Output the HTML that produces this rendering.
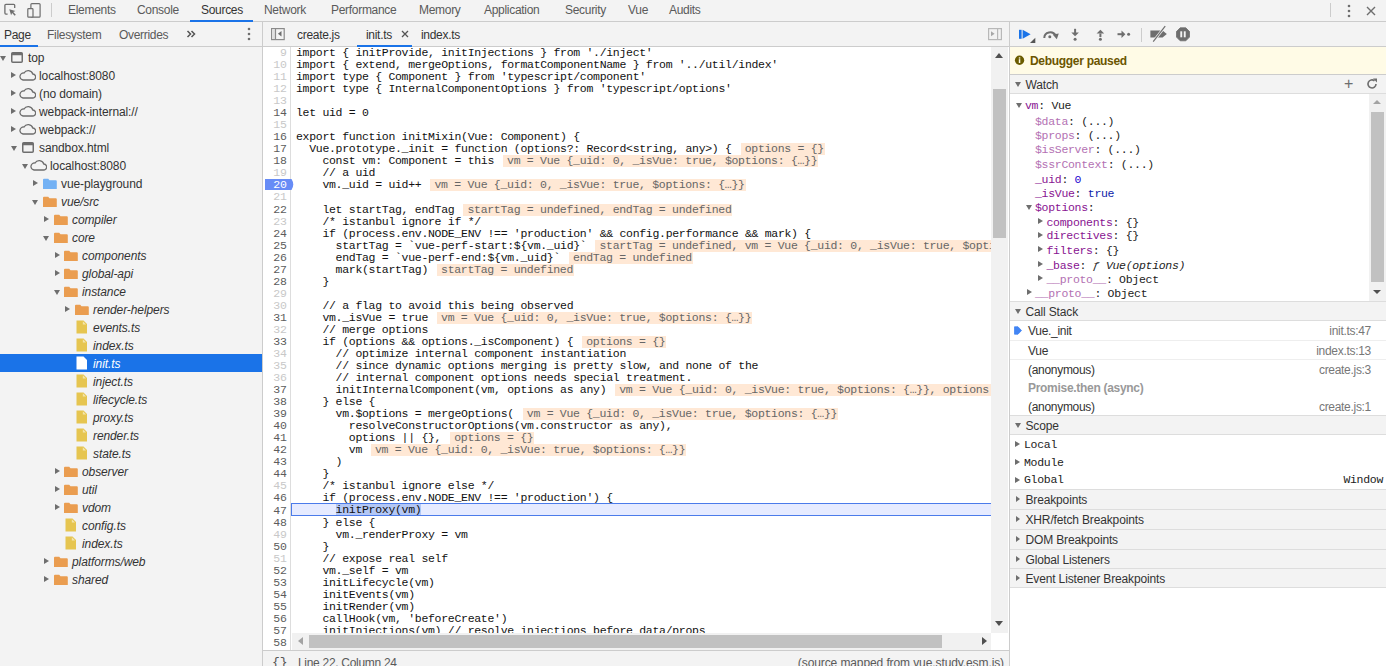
<!DOCTYPE html><html><head><meta charset="utf-8"><style>
*{box-sizing:border-box;margin:0;padding:0}
html,body{width:1386px;height:666px;overflow:hidden;background:#fff;font-family:"Liberation Sans", sans-serif;font-size:12px;color:#333;letter-spacing:-0.3px}
.abs{position:absolute}
#topbar{left:0;top:0;width:1386px;height:22px;background:#f3f3f3;border-bottom:1px solid #ccc}
.ttab{position:absolute;top:3px;font-size:12px;color:#5a5a5a;white-space:nowrap}
.ttab.sel{color:#333}
#left{left:0;top:22px;width:263px;height:644px;background:#f3f3f3;border-right:1px solid #ccc}
#lefttabs{left:0;top:0;width:262px;height:25px;border-bottom:1px solid #ccc}
.row{position:absolute;left:0;width:262px;height:18px;white-space:nowrap;letter-spacing:-0.1px}
.row.sel{background:#1a73e8;color:#fff}
.row .t{position:absolute;top:3px}
.it{font-style:italic}
#editor{left:263px;top:22px;width:746px;height:644px;background:#fff}
#etabs{left:0;top:0;width:746px;height:25px;background:#f3f3f3;border-bottom:1px solid #ccc}
#gutter{left:0;top:25px;width:28px;height:603px;background:#fff;border-right:1px solid #ddd}
.ln{position:absolute;right:3px;font-family:"Liberation Mono", monospace;font-size:11.5px;line-height:12px;color:#c8c8c8;text-align:right;letter-spacing:0}
.ln.d{color:#5c5c5c}
.cl{position:absolute;left:33px;height:12px;font-family:"Liberation Mono", monospace;font-size:11.5px;line-height:12px;color:#111;white-space:pre;letter-spacing:-0.3px}
.wd{display:inline-block;vertical-align:top;height:12px;line-height:12px;margin-top:0px;background:#ffe8d5;color:#666;margin-left:9px;padding-left:4px;padding-right:1px}
#status{left:0;top:628px;width:746px;height:16px;background:#f3f3f3;border-top:1px solid #ccc}
#right{left:1009px;top:22px;width:377px;height:644px;background:#fff;border-left:1px solid #ccc}
.hdr{position:absolute;left:0;width:376px;background:#f3f3f3;border-bottom:1px solid #ddd;letter-spacing:-0.15px}
.hdr .t{position:absolute;left:16px;top:3px}
.tri{position:absolute;width:0;height:0}
.tri.dn{border-left:4px solid transparent;border-right:4px solid transparent;border-top:6px solid #6e6e6e}
.tri.rt{border-top:4px solid transparent;border-bottom:4px solid transparent;border-left:6px solid #6e6e6e}
.mono{font-family:"Liberation Mono", monospace;font-size:11.5px;letter-spacing:-0.3px}
</style></head><body>
<div id="topbar" class="abs">
<svg class="abs" style="left:0;top:0" width="50" height="21" viewBox="0 0 50 21">
<path d="M7.6 14.1H5.9a1 1 0 0 1-1-1V5.3a1 1 0 0 1 1-1h7.8a1 1 0 0 1 1 1V8" fill="none" stroke="#6e6e6e" stroke-width="1.3"/>
<path d="M9.3 9.3l6.1 1.6-2.2 1 2.6 2.8-1.1 1-2.6-2.8-1 2.3z" fill="#6e6e6e"/>
<rect x="30.9" y="3.6" width="9.2" height="13.6" rx="1" fill="none" stroke="#6e6e6e" stroke-width="1.2"/>
<rect x="27.8" y="8.6" width="5.2" height="8.6" rx="0.8" fill="#f3f3f3" stroke="#6e6e6e" stroke-width="1.2"/>
</svg>
<div class="abs" style="left:51px;top:3px;width:1px;height:14px;background:#ccc"></div>
<div class="ttab" style="left:68px">Elements</div>
<div class="ttab" style="left:137px">Console</div>
<div class="ttab sel" style="left:201px">Sources</div>
<div class="ttab" style="left:264px">Network</div>
<div class="ttab" style="left:331px">Performance</div>
<div class="ttab" style="left:419px">Memory</div>
<div class="ttab" style="left:484px">Application</div>
<div class="ttab" style="left:565px">Security</div>
<div class="ttab" style="left:628px">Vue</div>
<div class="ttab" style="left:669px">Audits</div>
<div class="abs" style="left:190px;top:20px;width:63px;height:2px;background:#1a73e8"></div>
<div class="abs" style="left:1330px;top:3px;width:1px;height:14px;background:#ccc"></div>
<svg class="abs" style="left:1344px;top:3px" width="10" height="16" viewBox="0 0 10 16"><circle cx="5" cy="3" r="1.3" fill="#6e6e6e"/><circle cx="5" cy="8" r="1.3" fill="#6e6e6e"/><circle cx="5" cy="13" r="1.3" fill="#6e6e6e"/></svg>
<svg class="abs" style="left:1365px;top:5px" width="12" height="12" viewBox="0 0 12 12"><path d="M2 2L10 10M10 2L2 10" stroke="#6e6e6e" stroke-width="1.4"/></svg>
</div>
<div id="left" class="abs">
<div id="lefttabs" class="abs">
<div class="ttab" style="left:4px;top:6px;color:#333">Page</div>
<div class="ttab" style="left:47px;top:6px;color:#5a5a5a">Filesystem</div>
<div class="ttab" style="left:119px;top:6px;color:#5a5a5a">Overrides</div>
<div class="abs" style="left:0;top:23px;width:38px;height:2px;background:#1a73e8"></div>
<svg class="abs" style="left:186px;top:8px" width="10" height="8" viewBox="0 0 10 8"><path d="M1.5 1L4.5 4 1.5 7M5.5 1L8.5 4 5.5 7" fill="none" stroke="#555" stroke-width="1.5"/></svg>
<svg class="abs" style="left:244px;top:4px" width="10" height="16" viewBox="0 0 10 16"><circle cx="5" cy="3" r="1.3" fill="#6e6e6e"/><circle cx="5" cy="8" r="1.3" fill="#6e6e6e"/><circle cx="5" cy="13" r="1.3" fill="#6e6e6e"/></svg>
</div>
<div class="row" style="top:26px">
<div class="tri dn" style="left:0.0px;top:8px;border-left-width:3.1px;border-right-width:3.1px;border-top-width:5px;border-top-color:#6e6e6e"></div>
<svg class="abs" style="left:11px;top:4px" width="12" height="11" viewBox="0 0 12 11"><rect x="0.75" y="0.75" width="10.5" height="9.5" rx="1" fill="none" stroke="#6e6e6e" stroke-width="1.5"/><rect x="0.75" y="0.75" width="10.5" height="2.5" fill="#6e6e6e"/></svg>
<div class="t" style="left:28px">top</div>
</div>
<div class="row" style="top:44px">
<div class="tri rt" style="left:11.4px;top:6px;border-top-width:3px;border-bottom-width:3px;border-left-width:5px;border-left-color:#6e6e6e"></div>
<svg class="abs" style="left:19px;top:3px" width="17" height="12" viewBox="0 0 17 12"><path d="M4 11h9.5a3 3 0 0 0 .3-6A4.8 4.8 0 0 0 5 4a3.5 3.5 0 0 0-1 7z" fill="none" stroke="#6e6e6e" stroke-width="1.3"/></svg>
<div class="t" style="left:39px">localhost:8080</div>
</div>
<div class="row" style="top:62px">
<div class="tri rt" style="left:11.4px;top:6px;border-top-width:3px;border-bottom-width:3px;border-left-width:5px;border-left-color:#6e6e6e"></div>
<svg class="abs" style="left:19px;top:3px" width="17" height="12" viewBox="0 0 17 12"><path d="M4 11h9.5a3 3 0 0 0 .3-6A4.8 4.8 0 0 0 5 4a3.5 3.5 0 0 0-1 7z" fill="none" stroke="#6e6e6e" stroke-width="1.3"/></svg>
<div class="t" style="left:39px">(no domain)</div>
</div>
<div class="row" style="top:80px">
<div class="tri rt" style="left:11.4px;top:6px;border-top-width:3px;border-bottom-width:3px;border-left-width:5px;border-left-color:#6e6e6e"></div>
<svg class="abs" style="left:19px;top:3px" width="17" height="12" viewBox="0 0 17 12"><path d="M4 11h9.5a3 3 0 0 0 .3-6A4.8 4.8 0 0 0 5 4a3.5 3.5 0 0 0-1 7z" fill="none" stroke="#6e6e6e" stroke-width="1.3"/></svg>
<div class="t" style="left:39px">webpack-internal://</div>
</div>
<div class="row" style="top:98px">
<div class="tri rt" style="left:11.4px;top:6px;border-top-width:3px;border-bottom-width:3px;border-left-width:5px;border-left-color:#6e6e6e"></div>
<svg class="abs" style="left:19px;top:3px" width="17" height="12" viewBox="0 0 17 12"><path d="M4 11h9.5a3 3 0 0 0 .3-6A4.8 4.8 0 0 0 5 4a3.5 3.5 0 0 0-1 7z" fill="none" stroke="#6e6e6e" stroke-width="1.3"/></svg>
<div class="t" style="left:39px">webpack://</div>
</div>
<div class="row" style="top:116px">
<div class="tri dn" style="left:10.8px;top:8px;border-left-width:3.1px;border-right-width:3.1px;border-top-width:5px;border-top-color:#6e6e6e"></div>
<svg class="abs" style="left:22px;top:4px" width="12" height="11" viewBox="0 0 12 11"><rect x="0.75" y="0.75" width="10.5" height="9.5" rx="1" fill="none" stroke="#6e6e6e" stroke-width="1.5"/><rect x="0.75" y="0.75" width="10.5" height="2.5" fill="#6e6e6e"/></svg>
<div class="t" style="left:39px">sandbox.html</div>
</div>
<div class="row" style="top:134px">
<div class="tri dn" style="left:21.6px;top:8px;border-left-width:3.1px;border-right-width:3.1px;border-top-width:5px;border-top-color:#6e6e6e"></div>
<svg class="abs" style="left:30px;top:3px" width="17" height="12" viewBox="0 0 17 12"><path d="M4 11h9.5a3 3 0 0 0 .3-6A4.8 4.8 0 0 0 5 4a3.5 3.5 0 0 0-1 7z" fill="none" stroke="#6e6e6e" stroke-width="1.3"/></svg>
<div class="t" style="left:50px">localhost:8080</div>
</div>
<div class="row" style="top:152px">
<div class="tri rt" style="left:33.0px;top:6px;border-top-width:3px;border-bottom-width:3px;border-left-width:5px;border-left-color:#6e6e6e"></div>
<svg class="abs" style="left:43px;top:3px" width="14" height="12" viewBox="0 0 14 12"><path d="M0 2.8a1 1 0 0 1 1-1h4.2l1.3 1.4h6.3a1 1 0 0 1 1 1v7.5a1 1 0 0 1-1 1H1a1 1 0 0 1-1-1z" fill="#73b1f4"/></svg>
<div class="t" style="left:61px">vue-playground</div>
</div>
<div class="row" style="top:170px">
<div class="tri dn" style="left:32.4px;top:8px;border-left-width:3.1px;border-right-width:3.1px;border-top-width:5px;border-top-color:#6e6e6e"></div>
<svg class="abs" style="left:43px;top:3px" width="14" height="12" viewBox="0 0 14 12"><path d="M0 2.8a1 1 0 0 1 1-1h4.2l1.3 1.4h6.3a1 1 0 0 1 1 1v7.5a1 1 0 0 1-1 1H1a1 1 0 0 1-1-1z" fill="#ea9d50"/></svg>
<div class="t it" style="left:61px">vue/src</div>
</div>
<div class="row" style="top:188px">
<div class="tri rt" style="left:43.8px;top:6px;border-top-width:3px;border-bottom-width:3px;border-left-width:5px;border-left-color:#6e6e6e"></div>
<svg class="abs" style="left:54px;top:3px" width="14" height="12" viewBox="0 0 14 12"><path d="M0 2.8a1 1 0 0 1 1-1h4.2l1.3 1.4h6.3a1 1 0 0 1 1 1v7.5a1 1 0 0 1-1 1H1a1 1 0 0 1-1-1z" fill="#ea9d50"/></svg>
<div class="t it" style="left:72px">compiler</div>
</div>
<div class="row" style="top:206px">
<div class="tri dn" style="left:43.2px;top:8px;border-left-width:3.1px;border-right-width:3.1px;border-top-width:5px;border-top-color:#6e6e6e"></div>
<svg class="abs" style="left:54px;top:3px" width="14" height="12" viewBox="0 0 14 12"><path d="M0 2.8a1 1 0 0 1 1-1h4.2l1.3 1.4h6.3a1 1 0 0 1 1 1v7.5a1 1 0 0 1-1 1H1a1 1 0 0 1-1-1z" fill="#ea9d50"/></svg>
<div class="t it" style="left:72px">core</div>
</div>
<div class="row" style="top:224px">
<div class="tri rt" style="left:54.6px;top:6px;border-top-width:3px;border-bottom-width:3px;border-left-width:5px;border-left-color:#6e6e6e"></div>
<svg class="abs" style="left:64px;top:3px" width="14" height="12" viewBox="0 0 14 12"><path d="M0 2.8a1 1 0 0 1 1-1h4.2l1.3 1.4h6.3a1 1 0 0 1 1 1v7.5a1 1 0 0 1-1 1H1a1 1 0 0 1-1-1z" fill="#ea9d50"/></svg>
<div class="t it" style="left:82px">components</div>
</div>
<div class="row" style="top:242px">
<div class="tri rt" style="left:54.6px;top:6px;border-top-width:3px;border-bottom-width:3px;border-left-width:5px;border-left-color:#6e6e6e"></div>
<svg class="abs" style="left:64px;top:3px" width="14" height="12" viewBox="0 0 14 12"><path d="M0 2.8a1 1 0 0 1 1-1h4.2l1.3 1.4h6.3a1 1 0 0 1 1 1v7.5a1 1 0 0 1-1 1H1a1 1 0 0 1-1-1z" fill="#ea9d50"/></svg>
<div class="t it" style="left:82px">global-api</div>
</div>
<div class="row" style="top:260px">
<div class="tri dn" style="left:54.0px;top:8px;border-left-width:3.1px;border-right-width:3.1px;border-top-width:5px;border-top-color:#6e6e6e"></div>
<svg class="abs" style="left:64px;top:3px" width="14" height="12" viewBox="0 0 14 12"><path d="M0 2.8a1 1 0 0 1 1-1h4.2l1.3 1.4h6.3a1 1 0 0 1 1 1v7.5a1 1 0 0 1-1 1H1a1 1 0 0 1-1-1z" fill="#ea9d50"/></svg>
<div class="t it" style="left:82px">instance</div>
</div>
<div class="row" style="top:278px">
<div class="tri rt" style="left:65.4px;top:6px;border-top-width:3px;border-bottom-width:3px;border-left-width:5px;border-left-color:#6e6e6e"></div>
<svg class="abs" style="left:75px;top:3px" width="14" height="12" viewBox="0 0 14 12"><path d="M0 2.8a1 1 0 0 1 1-1h4.2l1.3 1.4h6.3a1 1 0 0 1 1 1v7.5a1 1 0 0 1-1 1H1a1 1 0 0 1-1-1z" fill="#ea9d50"/></svg>
<div class="t it" style="left:93px">render-helpers</div>
</div>
<div class="row" style="top:296px">
<svg class="abs" style="left:76px;top:2px" width="12" height="14" viewBox="0 0 12 14"><path d="M0.5 0.5h7l3.5 3.5v9.5h-10.5z" fill="#e6c550"/><path d="M6.8 1.2v3.3h3.3z" fill="#f7ecc0" opacity="0.8"/></svg>
<div class="t it" style="left:93px">events.ts</div>
</div>
<div class="row" style="top:314px">
<svg class="abs" style="left:76px;top:2px" width="12" height="14" viewBox="0 0 12 14"><path d="M0.5 0.5h7l3.5 3.5v9.5h-10.5z" fill="#e6c550"/><path d="M6.8 1.2v3.3h3.3z" fill="#f7ecc0" opacity="0.8"/></svg>
<div class="t it" style="left:93px">index.ts</div>
</div>
<div class="row sel" style="top:332px">
<svg class="abs" style="left:76px;top:2px" width="12" height="14" viewBox="0 0 12 14"><path d="M0.5 0.5h7l3.5 3.5v9.5h-10.5z" fill="#fff"/><path d="M6.8 1.2v3.3h3.3z" fill="#fff" opacity="0.8"/></svg>
<div class="t it" style="left:93px">init.ts</div>
</div>
<div class="row" style="top:350px">
<svg class="abs" style="left:76px;top:2px" width="12" height="14" viewBox="0 0 12 14"><path d="M0.5 0.5h7l3.5 3.5v9.5h-10.5z" fill="#e6c550"/><path d="M6.8 1.2v3.3h3.3z" fill="#f7ecc0" opacity="0.8"/></svg>
<div class="t it" style="left:93px">inject.ts</div>
</div>
<div class="row" style="top:368px">
<svg class="abs" style="left:76px;top:2px" width="12" height="14" viewBox="0 0 12 14"><path d="M0.5 0.5h7l3.5 3.5v9.5h-10.5z" fill="#e6c550"/><path d="M6.8 1.2v3.3h3.3z" fill="#f7ecc0" opacity="0.8"/></svg>
<div class="t it" style="left:93px">lifecycle.ts</div>
</div>
<div class="row" style="top:386px">
<svg class="abs" style="left:76px;top:2px" width="12" height="14" viewBox="0 0 12 14"><path d="M0.5 0.5h7l3.5 3.5v9.5h-10.5z" fill="#e6c550"/><path d="M6.8 1.2v3.3h3.3z" fill="#f7ecc0" opacity="0.8"/></svg>
<div class="t it" style="left:93px">proxy.ts</div>
</div>
<div class="row" style="top:404px">
<svg class="abs" style="left:76px;top:2px" width="12" height="14" viewBox="0 0 12 14"><path d="M0.5 0.5h7l3.5 3.5v9.5h-10.5z" fill="#e6c550"/><path d="M6.8 1.2v3.3h3.3z" fill="#f7ecc0" opacity="0.8"/></svg>
<div class="t it" style="left:93px">render.ts</div>
</div>
<div class="row" style="top:422px">
<svg class="abs" style="left:76px;top:2px" width="12" height="14" viewBox="0 0 12 14"><path d="M0.5 0.5h7l3.5 3.5v9.5h-10.5z" fill="#e6c550"/><path d="M6.8 1.2v3.3h3.3z" fill="#f7ecc0" opacity="0.8"/></svg>
<div class="t it" style="left:93px">state.ts</div>
</div>
<div class="row" style="top:440px">
<div class="tri rt" style="left:54.6px;top:6px;border-top-width:3px;border-bottom-width:3px;border-left-width:5px;border-left-color:#6e6e6e"></div>
<svg class="abs" style="left:64px;top:3px" width="14" height="12" viewBox="0 0 14 12"><path d="M0 2.8a1 1 0 0 1 1-1h4.2l1.3 1.4h6.3a1 1 0 0 1 1 1v7.5a1 1 0 0 1-1 1H1a1 1 0 0 1-1-1z" fill="#ea9d50"/></svg>
<div class="t it" style="left:82px">observer</div>
</div>
<div class="row" style="top:458px">
<div class="tri rt" style="left:54.6px;top:6px;border-top-width:3px;border-bottom-width:3px;border-left-width:5px;border-left-color:#6e6e6e"></div>
<svg class="abs" style="left:64px;top:3px" width="14" height="12" viewBox="0 0 14 12"><path d="M0 2.8a1 1 0 0 1 1-1h4.2l1.3 1.4h6.3a1 1 0 0 1 1 1v7.5a1 1 0 0 1-1 1H1a1 1 0 0 1-1-1z" fill="#ea9d50"/></svg>
<div class="t it" style="left:82px">util</div>
</div>
<div class="row" style="top:476px">
<div class="tri rt" style="left:54.6px;top:6px;border-top-width:3px;border-bottom-width:3px;border-left-width:5px;border-left-color:#6e6e6e"></div>
<svg class="abs" style="left:64px;top:3px" width="14" height="12" viewBox="0 0 14 12"><path d="M0 2.8a1 1 0 0 1 1-1h4.2l1.3 1.4h6.3a1 1 0 0 1 1 1v7.5a1 1 0 0 1-1 1H1a1 1 0 0 1-1-1z" fill="#ea9d50"/></svg>
<div class="t it" style="left:82px">vdom</div>
</div>
<div class="row" style="top:494px">
<svg class="abs" style="left:65px;top:2px" width="12" height="14" viewBox="0 0 12 14"><path d="M0.5 0.5h7l3.5 3.5v9.5h-10.5z" fill="#e6c550"/><path d="M6.8 1.2v3.3h3.3z" fill="#f7ecc0" opacity="0.8"/></svg>
<div class="t it" style="left:82px">config.ts</div>
</div>
<div class="row" style="top:512px">
<svg class="abs" style="left:65px;top:2px" width="12" height="14" viewBox="0 0 12 14"><path d="M0.5 0.5h7l3.5 3.5v9.5h-10.5z" fill="#e6c550"/><path d="M6.8 1.2v3.3h3.3z" fill="#f7ecc0" opacity="0.8"/></svg>
<div class="t it" style="left:82px">index.ts</div>
</div>
<div class="row" style="top:530px">
<div class="tri rt" style="left:43.8px;top:6px;border-top-width:3px;border-bottom-width:3px;border-left-width:5px;border-left-color:#6e6e6e"></div>
<svg class="abs" style="left:54px;top:3px" width="14" height="12" viewBox="0 0 14 12"><path d="M0 2.8a1 1 0 0 1 1-1h4.2l1.3 1.4h6.3a1 1 0 0 1 1 1v7.5a1 1 0 0 1-1 1H1a1 1 0 0 1-1-1z" fill="#ea9d50"/></svg>
<div class="t it" style="left:72px">platforms/web</div>
</div>
<div class="row" style="top:548px">
<div class="tri rt" style="left:43.8px;top:6px;border-top-width:3px;border-bottom-width:3px;border-left-width:5px;border-left-color:#6e6e6e"></div>
<svg class="abs" style="left:54px;top:3px" width="14" height="12" viewBox="0 0 14 12"><path d="M0 2.8a1 1 0 0 1 1-1h4.2l1.3 1.4h6.3a1 1 0 0 1 1 1v7.5a1 1 0 0 1-1 1H1a1 1 0 0 1-1-1z" fill="#ea9d50"/></svg>
<div class="t it" style="left:72px">shared</div>
</div>
</div>
<div id="editor" class="abs">
<div id="etabs" class="abs">
<svg class="abs" style="left:8px;top:6px" width="15" height="13" viewBox="0 0 15 13"><rect x="0.6" y="0.6" width="12.6" height="11" fill="none" stroke="#8a8a8a" stroke-width="1.2"/><rect x="1.2" y="1.2" width="3" height="9.8" fill="#e0e0e0"/><path d="M4.5 0.6v11" stroke="#8a8a8a" stroke-width="1.2"/><path d="M10.5 3v5.6l-3.6-2.8z" fill="#6e6e6e"/></svg>
<div class="ttab" style="left:34px;top:6px;color:#333">create.js</div>
<div class="ttab" style="left:103px;top:6px;color:#333">init.ts</div>
<svg class="abs" style="left:138px;top:8px" width="8" height="8" viewBox="0 0 8 8"><path d="M1 1L7 7M7 1L1 7" stroke="#555" stroke-width="1.3"/></svg>
<div class="abs" style="left:94px;top:23px;width:55px;height:2px;background:#1a73e8"></div>
<div class="ttab" style="left:158px;top:6px;color:#333">index.ts</div>
<svg class="abs" style="left:725px;top:6px" width="15" height="13" viewBox="0 0 15 13"><rect x="0.6" y="0.6" width="12.8" height="11" fill="none" stroke="#b8b8b8" stroke-width="1.2"/><path d="M9.6 0.6v11" stroke="#b8b8b8" stroke-width="1.2"/><path d="M3 3.2v5l3.6-2.5z" fill="#a8a8a8"/></svg>
</div>
<div id="gutter" class="abs"></div>
<div class="abs" style="left:0;top:25px;width:728px;height:603px;overflow:hidden">
<div class="ln" style="top:0.0px;right:auto;left:0;width:24px">9</div>
<div class="cl" style="top:0.0px">import { initProvide, initInjections } from &#x27;./inject&#x27;</div>
<div class="ln" style="top:12.04px;right:auto;left:0;width:24px">10</div>
<div class="cl" style="top:12.04px">import { extend, mergeOptions, formatComponentName } from &#x27;../util/index&#x27;</div>
<div class="ln" style="top:24.08px;right:auto;left:0;width:24px">11</div>
<div class="cl" style="top:24.08px">import type { Component } from &#x27;typescript/component&#x27;</div>
<div class="ln" style="top:36.12px;right:auto;left:0;width:24px">12</div>
<div class="cl" style="top:36.12px">import type { InternalComponentOptions } from &#x27;typescript/options&#x27;</div>
<div class="ln" style="top:48.16px;right:auto;left:0;width:24px">13</div>
<div class="cl" style="top:48.16px"></div>
<div class="ln d" style="top:60.2px;right:auto;left:0;width:24px">14</div>
<div class="cl" style="top:60.2px">let uid = 0</div>
<div class="ln" style="top:72.24px;right:auto;left:0;width:24px">15</div>
<div class="cl" style="top:72.24px"></div>
<div class="ln d" style="top:84.28px;right:auto;left:0;width:24px">16</div>
<div class="cl" style="top:84.28px">export function initMixin(Vue: Component) {</div>
<div class="ln d" style="top:96.32px;right:auto;left:0;width:24px">17</div>
<div class="cl" style="top:96.32px">  Vue.prototype._init = function (options?: Record&lt;string, any&gt;) {<span class="wd">options = {}</span></div>
<div class="ln d" style="top:108.36px;right:auto;left:0;width:24px">18</div>
<div class="cl" style="top:108.36px">    const vm: Component = this<span class="wd">vm = Vue {_uid: 0, _isVue: true, $options: {…}}</span></div>
<div class="ln" style="top:120.4px;right:auto;left:0;width:24px">19</div>
<div class="cl" style="top:120.4px">    // a uid</div>
<svg class="abs" style="left:2px;top:132.44px" width="29" height="11" viewBox="0 0 29 11"><path d="M0 0h26.5q3.5 5.5 0 11H0z" fill="#678cf6"/></svg>
<div class="ln" style="top:132.44px;right:auto;left:0;width:24px;color:#fff">20</div>
<div class="cl" style="top:132.44px">    vm._uid = uid++<span class="wd">vm = Vue {_uid: 0, _isVue: true, $options: {…}}</span></div>
<div class="ln" style="top:144.48px;right:auto;left:0;width:24px">21</div>
<div class="cl" style="top:144.48px"></div>
<div class="ln d" style="top:156.52px;right:auto;left:0;width:24px">22</div>
<div class="cl" style="top:156.52px">    let startTag, endTag<span class="wd">startTag = undefined, endTag = undefined</span></div>
<div class="ln" style="top:168.56px;right:auto;left:0;width:24px">23</div>
<div class="cl" style="top:168.56px">    /* istanbul ignore if */</div>
<div class="ln d" style="top:180.6px;right:auto;left:0;width:24px">24</div>
<div class="cl" style="top:180.6px">    if (process.env.NODE_ENV !== &#x27;production&#x27; &amp;&amp; config.performance &amp;&amp; mark) {</div>
<div class="ln d" style="top:192.64px;right:auto;left:0;width:24px">25</div>
<div class="cl" style="top:192.64px">      startTag = `vue-perf-start:${vm._uid}`<span class="wd">startTag = undefined, vm = Vue {_uid: 0, _isVue: true, $options: {…}}</span></div>
<div class="ln d" style="top:204.68px;right:auto;left:0;width:24px">26</div>
<div class="cl" style="top:204.68px">      endTag = `vue-perf-end:${vm._uid}`<span class="wd">endTag = undefined</span></div>
<div class="ln d" style="top:216.72px;right:auto;left:0;width:24px">27</div>
<div class="cl" style="top:216.72px">      mark(startTag)<span class="wd">startTag = undefined</span></div>
<div class="ln d" style="top:228.76px;right:auto;left:0;width:24px">28</div>
<div class="cl" style="top:228.76px">    }</div>
<div class="ln" style="top:240.8px;right:auto;left:0;width:24px">29</div>
<div class="cl" style="top:240.8px"></div>
<div class="ln" style="top:252.84px;right:auto;left:0;width:24px">30</div>
<div class="cl" style="top:252.84px">    // a flag to avoid this being observed</div>
<div class="ln d" style="top:264.88px;right:auto;left:0;width:24px">31</div>
<div class="cl" style="top:264.88px">    vm._isVue = true<span class="wd">vm = Vue {_uid: 0, _isVue: true, $options: {…}}</span></div>
<div class="ln" style="top:276.92px;right:auto;left:0;width:24px">32</div>
<div class="cl" style="top:276.92px">    // merge options</div>
<div class="ln d" style="top:288.96px;right:auto;left:0;width:24px">33</div>
<div class="cl" style="top:288.96px">    if (options &amp;&amp; options._isComponent) {<span class="wd">options = {}</span></div>
<div class="ln" style="top:301.0px;right:auto;left:0;width:24px">34</div>
<div class="cl" style="top:301.0px">      // optimize internal component instantiation</div>
<div class="ln" style="top:313.04px;right:auto;left:0;width:24px">35</div>
<div class="cl" style="top:313.04px">      // since dynamic options merging is pretty slow, and none of the</div>
<div class="ln" style="top:325.08px;right:auto;left:0;width:24px">36</div>
<div class="cl" style="top:325.08px">      // internal component options needs special treatment.</div>
<div class="ln d" style="top:337.12px;right:auto;left:0;width:24px">37</div>
<div class="cl" style="top:337.12px">      initInternalComponent(vm, options as any)<span class="wd">vm = Vue {_uid: 0, _isVue: true, $options: {…}}, options = {}</span></div>
<div class="ln d" style="top:349.16px;right:auto;left:0;width:24px">38</div>
<div class="cl" style="top:349.16px">    } else {</div>
<div class="ln d" style="top:361.2px;right:auto;left:0;width:24px">39</div>
<div class="cl" style="top:361.2px">      vm.$options = mergeOptions(<span class="wd">vm = Vue {_uid: 0, _isVue: true, $options: {…}}</span></div>
<div class="ln d" style="top:373.24px;right:auto;left:0;width:24px">40</div>
<div class="cl" style="top:373.24px">        resolveConstructorOptions(vm.constructor as any),</div>
<div class="ln d" style="top:385.28px;right:auto;left:0;width:24px">41</div>
<div class="cl" style="top:385.28px">        options || {},<span class="wd">options = {}</span></div>
<div class="ln d" style="top:397.32px;right:auto;left:0;width:24px">42</div>
<div class="cl" style="top:397.32px">        vm<span class="wd">vm = Vue {_uid: 0, _isVue: true, $options: {…}}</span></div>
<div class="ln d" style="top:409.36px;right:auto;left:0;width:24px">43</div>
<div class="cl" style="top:409.36px">      )</div>
<div class="ln d" style="top:421.4px;right:auto;left:0;width:24px">44</div>
<div class="cl" style="top:421.4px">    }</div>
<div class="ln" style="top:433.44px;right:auto;left:0;width:24px">45</div>
<div class="cl" style="top:433.44px">    /* istanbul ignore else */</div>
<div class="ln d" style="top:445.48px;right:auto;left:0;width:24px">46</div>
<div class="cl" style="top:445.48px">    if (process.env.NODE_ENV !== &#x27;production&#x27;) {</div>
<div class="abs" style="left:28px;top:456px;width:700px;height:13px;background:#e6ebff;border:1px solid #4b7bea;border-right:0"></div>
<div class="ln d" style="top:457.52px;right:auto;left:0;width:24px">47</div>
<div class="cl" style="top:457.52px">      <span style="background:#b3c7f5;display:inline-block;height:11px;vertical-align:top;margin-top:-1px">initProxy(vm)</span></div>
<div class="ln d" style="top:469.56px;right:auto;left:0;width:24px">48</div>
<div class="cl" style="top:469.56px">    } else {</div>
<div class="ln" style="top:481.6px;right:auto;left:0;width:24px">49</div>
<div class="cl" style="top:481.6px">      vm._renderProxy = vm</div>
<div class="ln d" style="top:493.64px;right:auto;left:0;width:24px">50</div>
<div class="cl" style="top:493.64px">    }</div>
<div class="ln" style="top:505.68px;right:auto;left:0;width:24px">51</div>
<div class="cl" style="top:505.68px">    // expose real self</div>
<div class="ln d" style="top:517.72px;right:auto;left:0;width:24px">52</div>
<div class="cl" style="top:517.72px">    vm._self = vm</div>
<div class="ln d" style="top:529.76px;right:auto;left:0;width:24px">53</div>
<div class="cl" style="top:529.76px">    initLifecycle(vm)</div>
<div class="ln d" style="top:541.8px;right:auto;left:0;width:24px">54</div>
<div class="cl" style="top:541.8px">    initEvents(vm)</div>
<div class="ln d" style="top:553.84px;right:auto;left:0;width:24px">55</div>
<div class="cl" style="top:553.84px">    initRender(vm)</div>
<div class="ln d" style="top:565.88px;right:auto;left:0;width:24px">56</div>
<div class="cl" style="top:565.88px">    callHook(vm, &#x27;beforeCreate&#x27;)</div>
<div class="ln d" style="top:577.92px;right:auto;left:0;width:24px">57</div>
<div class="cl" style="top:577.92px">    initInjections(vm) // resolve injections before data/props</div>
<div class="ln d" style="top:589.96px;right:auto;left:0;width:24px">58</div>
<div class="cl" style="top:589.96px"></div>
</div>
<div class="abs" style="left:728px;top:25px;width:17px;height:586px;background:#f1f1f1">
<div class="abs" style="left:2px;top:42px;width:13px;height:149px;background:#c1c1c1"></div>
<div class="tri" style="left:4px;top:6px;border-left:4px solid transparent;border-right:4px solid transparent;border-bottom:5px solid #505050"></div>
<div class="tri" style="left:4px;top:574px;border-left:4px solid transparent;border-right:4px solid transparent;border-top:5px solid #505050"></div>
</div>
<div class="abs" style="left:29px;top:611px;width:699px;height:17px;background:#f1f1f1">
<div class="abs" style="left:17px;top:2px;width:633px;height:13px;background:#c1c1c1"></div>
<div class="tri" style="left:6px;top:4px;border-top:4px solid transparent;border-bottom:4px solid transparent;border-right:5px solid #a3a3a3"></div>
<div class="tri" style="left:690px;top:4px;border-top:4px solid transparent;border-bottom:4px solid transparent;border-left:5px solid #505050"></div>
</div>
<div id="status" class="abs">
<div class="abs mono" style="left:9px;top:4px;color:#555;font-size:13px;letter-spacing:0">{}</div>
<div class="abs" style="left:35px;top:5px;color:#5a5a5a">Line 22, Column 24</div>
<div class="abs" style="right:5px;top:5px;color:#5a5a5a;letter-spacing:-0.1px">(source mapped from vue.study.esm.js)</div>
</div>
</div>
<div id="right" class="abs">
<div class="abs" style="left:0;top:0;width:376px;height:25px;background:#f3f3f3;border-bottom:1px solid #ccc">
<svg class="abs" style="left:0;top:1px" width="200" height="23" viewBox="0 0 200 23">
<rect x="9" y="6.8" width="2.6" height="9" fill="#1a73e8"/><path d="M12.6 6.8L20.6 11.3 12.6 15.8z" fill="#1a73e8"/>
<path d="M20 20H25.3V14.8z" fill="#555"/>
<path d="M34.3 15A6 5.6 0 0 1 45.6 12.4" fill="none" stroke="#6e6e6e" stroke-width="2"/>
<path d="M42.6 11.4L48.8 10.6 46.8 16.2z" fill="#6e6e6e"/>
<circle cx="39.8" cy="13.8" r="1.5" fill="#6e6e6e"/>
<path d="M65.1 5.8V10" stroke="#6e6e6e" stroke-width="2"/><path d="M61.3 9.4H68.9L65.1 13.2z" fill="#6e6e6e"/><circle cx="65.1" cy="16.3" r="1.5" fill="#6e6e6e"/>
<path d="M90.4 10.5V14" stroke="#6e6e6e" stroke-width="2"/><path d="M86.6 10.6H94.2L90.4 6.8z" fill="#6e6e6e"/><circle cx="90.4" cy="16.3" r="1.5" fill="#6e6e6e"/>
<path d="M107.5 11.2H112" stroke="#6e6e6e" stroke-width="2"/><path d="M111.5 7.5V14.9L115.4 11.2z" fill="#6e6e6e"/><circle cx="118.6" cy="11.2" r="1.5" fill="#6e6e6e"/>
<rect x="131" y="5" width="1" height="14" fill="#ccc"/>
<path d="M140.4 7.6H152.6L156.8 11.1 152.6 14.6H140.4z" fill="#6e6e6e"/>
<path d="M143.2 18.6L155.2 3.2" stroke="#f3f3f3" stroke-width="2.6"/><path d="M143.2 18.6L155.2 3.2" stroke="#6e6e6e" stroke-width="1.2"/>
<path d="M170.2 4.8H175.8L179.5 8.5V14.1L175.8 17.8H170.2L166.5 14.1V8.5z" fill="#6e6e6e" stroke="#6e6e6e" stroke-width="0.8" stroke-linejoin="round"/>
<rect x="170.3" y="8.3" width="1.9" height="6" fill="#f3f3f3"/><rect x="173.8" y="8.3" width="1.9" height="6" fill="#f3f3f3"/>
</svg>
</div>
<div class="abs" style="left:0;top:25px;width:376px;height:28px;background:#fffbe6;border-bottom:1px solid #ccc">
<svg class="abs" style="left:0;top:0" width="30" height="27" viewBox="0 0 30 27"><circle cx="9.55" cy="13.25" r="4.65" fill="#6b5c00"/><rect x="8.8" y="12.2" width="1.5" height="3.8" fill="#fffbe6"/><rect x="8.8" y="10.3" width="1.5" height="1.3" fill="#fffbe6"/></svg>
<div class="abs" style="left:20px;top:7px;font-weight:bold;color:#6b5500">Debugger paused</div>
</div>
<div class="hdr" style="top:53px;height:19px">
<div class="tri dn" style="left:5px;top:7px;border-left-width:3.4px;border-right-width:3.4px;border-top-width:5.4px"></div>
<div class="t" style="left:15.5px;top:3px">Watch</div><div class="abs" style="left:334px;top:0px;font-size:16px;color:#6e6e6e">+</div><svg class="abs" style="left:356px;top:3px" width="12" height="12" viewBox="0 0 12 12"><path d="M10 6A4 4 0 1 1 8.5 2.8" fill="none" stroke="#6e6e6e" stroke-width="1.6"/><path d="M7 0.5h4v4z" fill="#6e6e6e"/></svg></div>
<div class="abs" style="left:0;top:72px;width:376px;height:208px;overflow:hidden;border-bottom:1px solid #ddd">
<div class="tri dn" style="left:5.5px;top:9.0px;border-left-width:3.2px;border-right-width:3.2px;border-top-width:5.3px"></div>
<div class="abs mono" style="left:15px;top:6px;line-height:12px;color:#222;white-space:pre"><span style="color:#881391">vm</span>: Vue</div>
<div class="abs mono" style="left:25px;top:22px;line-height:12px;color:#222;white-space:pre"><span style="color:#b371b3">$data</span>: (...)</div>
<div class="abs mono" style="left:25px;top:36px;line-height:12px;color:#222;white-space:pre"><span style="color:#b371b3">$props</span>: (...)</div>
<div class="abs mono" style="left:25px;top:50px;line-height:12px;color:#222;white-space:pre"><span style="color:#b371b3">$isServer</span>: (...)</div>
<div class="abs mono" style="left:25px;top:65px;line-height:12px;color:#222;white-space:pre"><span style="color:#b371b3">$ssrContext</span>: (...)</div>
<div class="abs mono" style="left:25px;top:80px;line-height:12px;color:#222;white-space:pre"><span style="color:#881391">_uid</span>: <span style="color:#1c00cf">0</span></div>
<div class="abs mono" style="left:25px;top:94px;line-height:12px;color:#222;white-space:pre"><span style="color:#881391">_isVue</span>: <span style="color:#0d22aa">true</span></div>
<div class="tri dn" style="left:15.5px;top:111.0px;border-left-width:3.2px;border-right-width:3.2px;border-top-width:5.3px"></div>
<div class="abs mono" style="left:25px;top:108px;line-height:12px;color:#222;white-space:pre"><span style="color:#881391">$options</span>:</div>
<div class="tri rt" style="left:28.0px;top:123.8px;border-top-width:3.15px;border-bottom-width:3.15px;border-left-width:5px"></div>
<div class="abs mono" style="left:36.5px;top:123px;line-height:12px;color:#222;white-space:pre"><span style="color:#881391">components</span>: {}</div>
<div class="tri rt" style="left:28.0px;top:137.7px;border-top-width:3.15px;border-bottom-width:3.15px;border-left-width:5px"></div>
<div class="abs mono" style="left:36.5px;top:136px;line-height:12px;color:#222;white-space:pre"><span style="color:#881391">directives</span>: {}</div>
<div class="tri rt" style="left:28.0px;top:152.4px;border-top-width:3.15px;border-bottom-width:3.15px;border-left-width:5px"></div>
<div class="abs mono" style="left:36.5px;top:151px;line-height:12px;color:#222;white-space:pre"><span style="color:#881391">filters</span>: {}</div>
<div class="tri rt" style="left:28.0px;top:166.8px;border-top-width:3.15px;border-bottom-width:3.15px;border-left-width:5px"></div>
<div class="abs mono" style="left:36.5px;top:166px;line-height:12px;color:#222;white-space:pre"><span style="color:#881391">_base</span>: <i>ƒ Vue(options)</i></div>
<div class="tri rt" style="left:28.0px;top:180.9px;border-top-width:3.15px;border-bottom-width:3.15px;border-left-width:5px"></div>
<div class="abs mono" style="left:36.5px;top:180px;line-height:12px;color:#222;white-space:pre"><span style="color:#b371b3">__proto__</span>: Object</div>
<div class="tri rt" style="left:16.5px;top:195.3px;border-top-width:3.15px;border-bottom-width:3.15px;border-left-width:5px"></div>
<div class="abs mono" style="left:25px;top:194px;line-height:12px;color:#222;white-space:pre"><span style="color:#b371b3">__proto__</span>: Object</div>
<div class="abs" style="left:359px;top:0;width:17px;height:207px;background:#f1f1f1"><div class="abs" style="left:2px;top:18px;width:13px;height:170px;background:#c1c1c1"></div>
<div class="tri" style="left:4px;top:6px;border-left:4px solid transparent;border-right:4px solid transparent;border-bottom:4px solid #a3a3a3"></div>
<div class="tri" style="left:4px;top:196px;border-left:4px solid transparent;border-right:4px solid transparent;border-top:4px solid #505050"></div></div>
</div>
<div class="hdr" style="top:280px;height:19px">
<div class="tri dn" style="left:5px;top:7px;border-left-width:3.4px;border-right-width:3.4px;border-top-width:5.4px"></div>
<div class="t" style="left:15.5px;top:3px">Call Stack</div></div>
<div class="abs" style="left:0;top:299px;width:376px;height:20px;border-bottom:1px solid #eee">
<svg class="abs" style="left:4px;top:4.7px" width="8" height="9" viewBox="0 0 8 9"><path d="M0.5 0.8h3.5l3.5 3.7-3.5 3.7H0.5z" fill="#4285f4" stroke="#4285f4" stroke-width="0.8" stroke-linejoin="round"/></svg>
<div class="abs" style="left:18px;top:3px;color:#333">Vue._init</div><div class="abs" style="right:15px;top:3px;color:#777">init.ts:47</div>
</div>
<div class="abs" style="left:0;top:319px;width:376px;height:19px;border-bottom:1px solid #eee">
<div class="abs" style="left:18px;top:3px;color:#333">Vue</div><div class="abs" style="right:15px;top:3px;color:#777">index.ts:13</div>
</div>
<div class="abs" style="left:0;top:338px;width:376px;height:19px;">
<div class="abs" style="left:18px;top:3px;color:#333">(anonymous)</div><div class="abs" style="right:15px;top:3px;color:#777">create.js:3</div>
</div>
<div class="abs" style="left:0;top:357px;width:376px;height:18px;">
<div class="abs" style="left:18px;top:2px;font-weight:bold;color:#999">Promise.then (async)</div>
</div>
<div class="abs" style="left:0;top:375px;width:376px;height:19px;border-bottom:1px solid #ddd">
<div class="abs" style="left:18px;top:3px;color:#333">(anonymous)</div><div class="abs" style="right:15px;top:3px;color:#777">create.js:1</div>
</div>
<div class="hdr" style="top:394px;height:19px">
<div class="tri dn" style="left:5px;top:7px;border-left-width:3.4px;border-right-width:3.4px;border-top-width:5.4px"></div>
<div class="t" style="left:15.5px;top:3px">Scope</div></div>
<div class="tri rt" style="left:4.8px;top:419.4px;border-top-width:3.25px;border-bottom-width:3.25px;border-left-width:5.2px"></div>
<div class="abs mono" style="left:14px;top:417px;line-height:12px;color:#222">Local</div>
<div class="tri rt" style="left:4.8px;top:437.2px;border-top-width:3.25px;border-bottom-width:3.25px;border-left-width:5.2px"></div>
<div class="abs mono" style="left:14px;top:435px;line-height:12px;color:#222">Module</div>
<div class="tri rt" style="left:4.8px;top:454.9px;border-top-width:3.25px;border-bottom-width:3.25px;border-left-width:5.2px"></div>
<div class="abs mono" style="left:14px;top:452px;line-height:12px;color:#222">Global</div>
<div class="abs mono" style="right:3px;top:452px;line-height:12px;color:#222">Window</div>
<div class="abs" style="left:0;top:467px;width:376px;height:1px;background:#ddd"></div>
<div class="hdr" style="top:468px;height:20px">
<div class="tri rt" style="left:5.5px;top:6px;border-top-width:3.2px;border-bottom-width:3.2px;border-left-width:4.8px"></div>
<div class="t" style="left:15.5px;top:3px">Breakpoints</div></div>
<div class="hdr" style="top:488px;height:20px">
<div class="tri rt" style="left:5.5px;top:6px;border-top-width:3.2px;border-bottom-width:3.2px;border-left-width:4.8px"></div>
<div class="t" style="left:15.5px;top:3px">XHR/fetch Breakpoints</div></div>
<div class="hdr" style="top:508px;height:20px">
<div class="tri rt" style="left:5.5px;top:6px;border-top-width:3.2px;border-bottom-width:3.2px;border-left-width:4.8px"></div>
<div class="t" style="left:15.5px;top:3px">DOM Breakpoints</div></div>
<div class="hdr" style="top:528px;height:19px">
<div class="tri rt" style="left:5.5px;top:6px;border-top-width:3.2px;border-bottom-width:3.2px;border-left-width:4.8px"></div>
<div class="t" style="left:15.5px;top:3px">Global Listeners</div></div>
<div class="hdr" style="top:547px;height:19px">
<div class="tri rt" style="left:5.5px;top:6px;border-top-width:3.2px;border-bottom-width:3.2px;border-left-width:4.8px"></div>
<div class="t" style="left:15.5px;top:3px">Event Listener Breakpoints</div></div>
</div>
</body></html>
